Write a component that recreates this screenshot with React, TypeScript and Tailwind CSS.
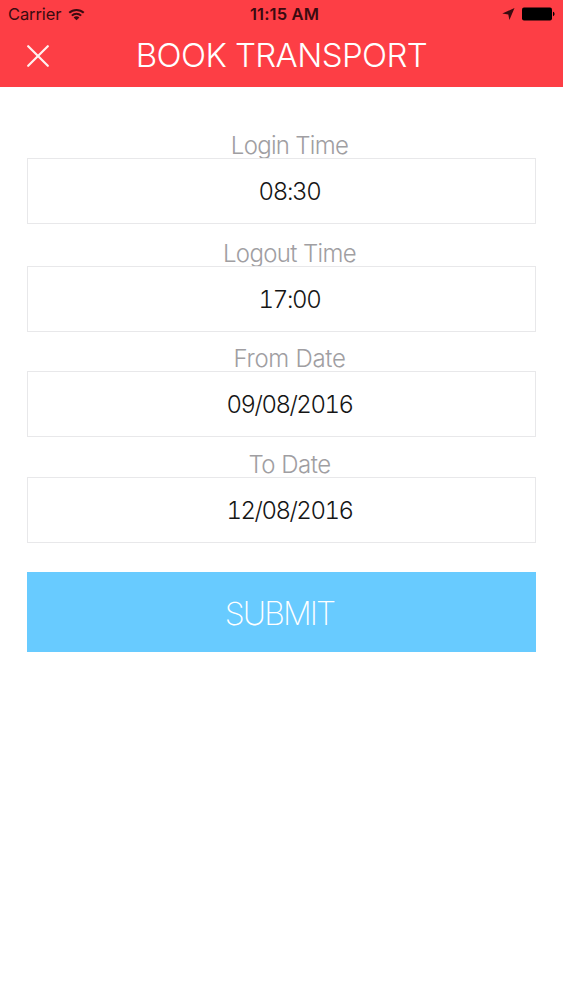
type FieldProps = {
  label: string;
  value: string;
  className: string;
  labelClass: string;
  valueClass: string;
};

function Field({ label, value, className, labelClass, valueClass }: FieldProps) {
  return (
    <label className={`flex flex-col ${className}`}>
      <span className={`flex h-[27px] items-center justify-center pt-[3px] pl-4 text-2xl leading-none font-light whitespace-nowrap text-[#a09ea2] ${labelClass}`}>
        <span>{label}</span>
      </span>
      <span className={`flex h-[66px] items-center justify-center border border-[#e8e8ea] pt-0.5 pl-4 text-2xl leading-none font-light whitespace-nowrap text-[#151515] tabular-nums ${valueClass}`}>
        <span>{value}</span>
      </span>
    </label>
  );
}

function StatusBar() {
  return (
    <div className="grid h-7 grid-cols-3 items-center pr-2 pl-2 text-[#3a0b10]">
      <div className="flex items-center gap-[7px] pt-px">
        <span className="text-[16.5px] leading-none tracking-[-0.1px]">Carrier</span>
        <svg width="17" height="13" viewBox="0 0 18 14" fill="none" stroke="currentColor" strokeWidth="2.2">
          <path d="M1.2 5.2C5.5 1 12.5 1 16.8 5.2" />
          <path d="M4 8.2C6.8 5.4 11.2 5.4 14 8.2" />
          <path d="M9 13.2 5.9 10.1C7.6 8.5 10.4 8.5 12.1 10.1Z" fill="currentColor" stroke="none" />
        </svg>
      </div>
      <span className="pl-1.5 text-center text-[16.5px] leading-none font-semibold tracking-[0.15px]">11:15 AM</span>
      <div className="flex items-center justify-end gap-[7px] text-black">
        <svg width="13" height="12" viewBox="0 0 13 12" fill="#3a0b10">
          <path d="M12.5 0 7.4 12 6.3 6.4.3 5.6Z" />
        </svg>
        <svg width="33" height="14" viewBox="0 0 33 14" fill="currentColor">
          <rect x="0" y="0.5" width="30" height="13" rx="2" />
          <path d="M31 4.8c2 .5 2 3.9 0 4.4Z" />
        </svg>
      </div>
    </div>
  );
}

export default function App() {
  return (
    <main className="flex h-[1000px] w-[563px] flex-col bg-white font-['Inter','Liberation_Sans',sans-serif]">
      <header className="flex h-[87px] flex-col bg-[#fd3e45]">
        <StatusBar />
        <div className="grid h-[54px] grid-cols-[76px_1fr_76px] items-center text-white">
          <button type="button" aria-label="Close" className="flex justify-center pt-0.5">
            <svg width="22" height="22" viewBox="0 0 22 22" fill="none" stroke="#fff0ee" strokeWidth="2.2" strokeLinecap="round">
              <path d="M1.2 1.2 20.8 20.8M20.8 1.2 1.2 20.8" />
            </svg>
          </button>
          <h1 className="text-center text-[33px] leading-none font-light tracking-[-0.6px] whitespace-nowrap">BOOK TRANSPORT</h1>
        </div>
      </header>
      <form className="flex flex-col pr-[27px] pl-[27px]">
        <Field label="Login Time" value="08:30" className="mt-[44px]" labelClass="tracking-[-0.7px]" valueClass="tracking-[-1.3px]" />
        <Field label="Logout Time" value="17:00" className="mt-[15px]" labelClass="tracking-[-0.65px]" valueClass="tracking-[-1.3px]" />
        <Field label="From Date" value="09/08/2016" className="mt-[12px]" labelClass="tracking-[-0.3px]" valueClass="tracking-[-1.5px]" />
        <Field label="To Date" value="12/08/2016" className="mt-[13px]" labelClass="tracking-[-0.5px]" valueClass="tracking-[-1.5px]" />
        <button type="button" className="mt-[29px] h-20 bg-[#68cbff] pt-[3px] pr-1 text-[32px] leading-none font-extralight tracking-[-1.9px] text-white">SUBMIT</button>
      </form>
    </main>
  );
}
